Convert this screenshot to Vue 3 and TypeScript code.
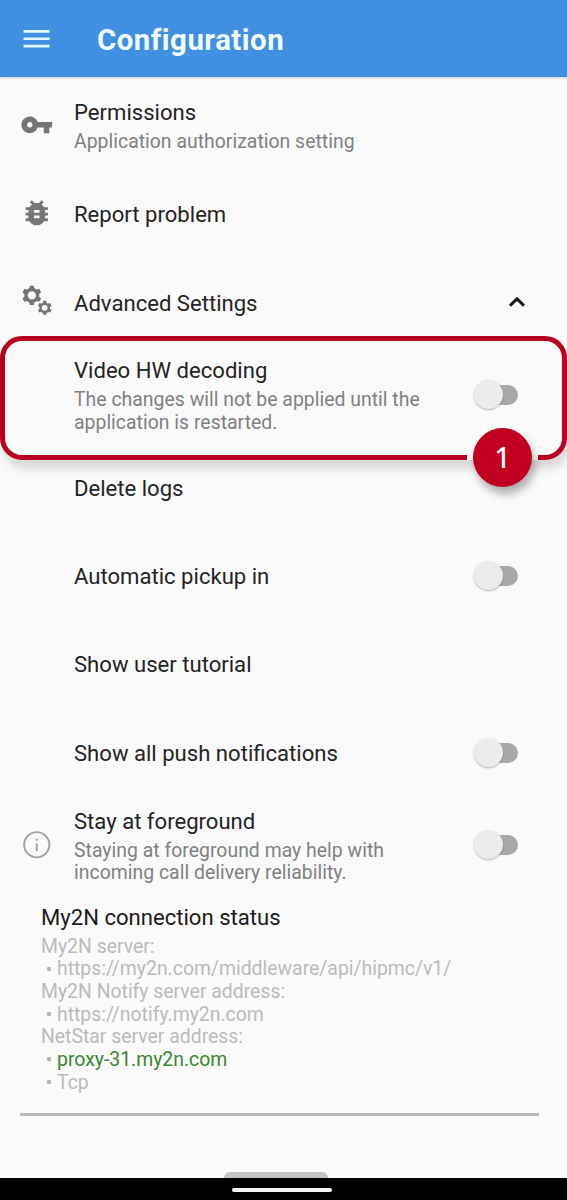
<script setup lang="ts">
type IconName = 'key' | 'bug' | 'gears' | 'info'

interface SettingRow {
  title: string
  detail?: string[]
  icon?: IconName
  control?: 'switch' | 'chevron'
  size: 'first' | 'single' | 'triple'
  highlighted?: boolean
}

const rows: SettingRow[] = [
  { title: 'Permissions', detail: ['Application authorization setting'], icon: 'key', size: 'first' },
  { title: 'Report problem', icon: 'bug', size: 'single' },
  { title: 'Advanced Settings', icon: 'gears', control: 'chevron', size: 'single' },
  {
    title: 'Video HW decoding',
    detail: ['The changes will not be applied until the', 'application is restarted.'],
    control: 'switch',
    size: 'triple',
    highlighted: true,
  },
  { title: 'Delete logs', size: 'single' },
  { title: 'Automatic pickup in', control: 'switch', size: 'single' },
  { title: 'Show user tutorial', size: 'single' },
  { title: 'Show all push notifications', control: 'switch', size: 'single' },
  {
    title: 'Stay at foreground',
    detail: ['Staying at foreground may help with', 'incoming call delivery reliability.'],
    icon: 'info',
    control: 'switch',
    size: 'triple',
  },
]

const status = [
  { text: 'My2N server:' },
  { text: 'https://my2n.com/middleware/api/hipmc/v1/', bullet: true },
  { text: 'My2N Notify server address:' },
  { text: 'https://notify.my2n.com', bullet: true },
  { text: 'NetStar server address:' },
  { text: 'proxy-31.my2n.com', bullet: true, online: true },
  { text: 'Tcp', bullet: true },
]

const teeth = [0, 60, 120, 180, 240, 300]
</script>

<template>
  <div class="screen">
    <header class="bar">
      <svg class="menu" viewBox="0 0 28 20"><path d="M0.5 2.1H27.5M0.5 9.8H27.5M0.5 17.4H27.5" /></svg>
      <h1>Configuration</h1>
    </header>

    <main>
      <section v-for="row in rows" :key="row.title" class="row" :class="row.size">
        <div class="lead">
          <svg v-if="row.icon === 'key'" class="icon" viewBox="0 0 24 24">
            <path d="M12.65 10C11.83 7.67 9.61 6 7 6c-3.31 0-6 2.69-6 6s2.69 6 6 6c2.61 0 4.83-1.67 5.65-4H17v4h4v-4h2v-4H12.65zM7 14c-1.1 0-2-.9-2-2s.9-2 2-2 2 .9 2 2-.9 2-2 2z" />
          </svg>
          <svg v-else-if="row.icon === 'bug'" class="icon raised" viewBox="0 0 24 24">
            <path d="M14 12H10V10H14M14 16H10V14H14M20 8H17.19C16.74 7.22 16.12 6.55 15.37 6.04L17 4.41L15.59 3L13.42 5.17C12.96 5.06 12.5 5 12 5C11.51 5 11.04 5.06 10.59 5.17L8.41 3L7 4.41L8.62 6.04C7.88 6.55 7.26 7.22 6.81 8H4V10H6.09C6.04 10.33 6 10.66 6 11V12H4V14H6V15C6 15.34 6.04 15.67 6.09 16H4V18H6.81C7.85 19.79 9.78 21 12 21C14.22 21 16.15 19.79 17.19 18H20V16H17.91C17.96 15.67 18 15.34 18 15V14H20V12H18V11C18 10.66 17.96 10.33 17.91 10H20V8Z" />
          </svg>
          <svg v-else-if="row.icon === 'gears'" class="icon raised" viewBox="0 0 34 34">
            <g transform="translate(12 11.5)">
              <circle class="ring" r="5.9" stroke-width="3.4" />
              <path v-for="a in teeth" :key="a" d="M-2.7 -6.5L-2 -9.8H2L2.7 -6.5Z" :transform="`rotate(${a})`" />
            </g>
            <g transform="translate(25.1 24.2)">
              <circle class="ring" r="4.2" stroke-width="2.5" />
              <path v-for="a in teeth" :key="a" d="M-2 -4.6L-1.5 -7.1H1.5L2 -4.6Z" :transform="`rotate(${a})`" />
            </g>
          </svg>
          <svg v-else-if="row.icon === 'info'" class="icon info" viewBox="0 0 34 34">
            <circle class="ring" cx="17" cy="17" r="12.8" stroke-width="2" />
            <path d="M16 15.5h2v8h-2zM16 10.7h2v2.2h-2z" />
          </svg>
        </div>
        <div class="copy">
          <div class="title">{{ row.title }}</div>
          <div v-if="row.detail" class="details">
            <div v-for="line in row.detail" :key="line" class="detail">{{ line }}</div>
          </div>
        </div>
        <div v-if="row.control === 'switch'" class="switch"><i></i></div>
        <svg v-else-if="row.control === 'chevron'" class="chevron" viewBox="0 0 18 12"><path d="M2 9.6L9 2.8L16 9.6" /></svg>
        <div v-if="row.highlighted" class="callout">
          <span class="gap"></span>
          <span class="badge">1</span>
        </div>
      </section>

      <section class="status">
        <div class="title">My2N connection status</div>
        <div v-for="line in status" :key="line.text" class="entry" :class="{ online: line.online }">
          <i v-if="line.bullet"></i><span>{{ line.text }}</span>
        </div>
      </section>
      <div class="divider"></div>
    </main>

    <div class="sheet"></div>
    <footer class="nav"><span></span></footer>
  </div>
</template>

<style>
body {
  background: #fafafa;
}
</style>

<style scoped>
.screen {
  display: flex;
  flex-direction: column;
  width: 567px;
  height: 1200px;
  overflow: hidden;
  background: #fafafa;
  font-family: Roboto, "Liberation Sans", sans-serif;
  color: #242424;
}
.bar {
  flex: none;
  display: flex;
  align-items: center;
  height: 77px;
  box-sizing: border-box;
  padding-left: 23px;
  background: #418fe1;
  box-shadow: 0 1px 2px rgba(0, 0, 0, 0.18);
}
.menu {
  width: 27px;
  height: 20px;
  margin-right: 47px;
}
.menu path {
  stroke: #e2f7ff;
  stroke-width: 2.7;
}
h1 {
  margin: 3px 0 0;
  font-size: 29.4px;
  line-height: 36px;
  font-weight: 700;
  letter-spacing: 0.5px;
  color: #f2fbff;
}
main {
  flex: 1;
}
.row {
  position: relative;
  display: flex;
  align-items: center;
}
.first {
  height: 93px;
  padding-top: 3px;
  box-sizing: border-box;
}
.single {
  height: 88.4px;
}
.triple {
  height: 96.6px;
}
.lead {
  width: 74px;
  display: flex;
  padding-left: 20px;
  box-sizing: border-box;
}
.icon {
  width: 33.5px;
  height: 33.5px;
  fill: #757575;
}
.raised {
  margin-bottom: 3px;
}
.info {
  fill: #a2a2a2;
}
.ring {
  fill: none;
  stroke: #757575;
}
.info .ring {
  stroke: #a2a2a2;
}
.copy {
  flex: 1;
  white-space: nowrap;
}
.title {
  font-size: 22.1px;
  line-height: 30px;
}
.details {
  margin-top: 4px;
}
.detail {
  font-size: 19.4px;
  line-height: 22.7px;
  letter-spacing: 0.02px;
  color: #818181;
}
.switch {
  position: relative;
  width: 35px;
  height: 20px;
  margin-right: 49px;
  border-radius: 10px;
  background: #a9a9a9;
}
.switch i {
  position: absolute;
  left: -9px;
  top: -5px;
  width: 29px;
  height: 29px;
  border-radius: 50%;
  background: #ececec;
  box-shadow: 0 1px 2px rgba(0, 0, 0, 0.28);
}
.chevron {
  width: 18px;
  height: 12px;
  margin: 0 41px 2px 0;
}
.chevron path {
  fill: none;
  stroke: #1c1c1c;
  stroke-width: 3;
}
.callout {
  position: absolute;
  z-index: 1;
  left: 0;
  top: -11px;
  width: 567px;
  height: 124px;
  box-sizing: border-box;
  border: 5px solid #b90020;
  border-radius: 22px;
  box-shadow: 3px 9px 9px rgba(0, 0, 0, 0.13);
}
.gap {
  position: absolute;
  left: 462px;
  bottom: -5px;
  width: 71px;
  height: 5px;
  background: #fafafa;
}
.badge {
  position: absolute;
  left: 468px;
  bottom: -32px;
  width: 59px;
  height: 59px;
  border-radius: 50%;
  background: #c10020;
  box-shadow: 3px 7px 9px rgba(0, 0, 0, 0.3);
  color: #fff;
  font: 500 28px/59px "Noto Sans", sans-serif;
  text-align: center;
}
.status {
  padding: 8px 0 0 41px;
  white-space: nowrap;
}
.status .title {
  margin-bottom: 4px;
  color: #1b1b1b;
}
.entry {
  display: flex;
  align-items: center;
  font-size: 19.4px;
  line-height: 22.7px;
  color: #bababa;
}
.entry i {
  width: 4px;
  height: 4px;
  margin: 0 6px 2px 6px;
  background: #b5b5b5;
  border-radius: 1px;
}
.online span {
  color: #38872f;
}
.divider {
  height: 3px;
  margin: 19px 28px 0 20px;
  background: #b9b9b9;
}
.sheet {
  width: 104px;
  height: 6px;
  margin-left: 224px;
  border-radius: 8px 8px 0 0;
  background: #c4c4c4;
}
.nav {
  flex: none;
  height: 22px;
  padding-top: 10px;
  box-sizing: border-box;
  background: #000;
}
.nav span {
  display: block;
  width: 100px;
  height: 4px;
  margin-left: 232px;
  border-radius: 2px;
  background: #f5f5f5;
}
</style>
